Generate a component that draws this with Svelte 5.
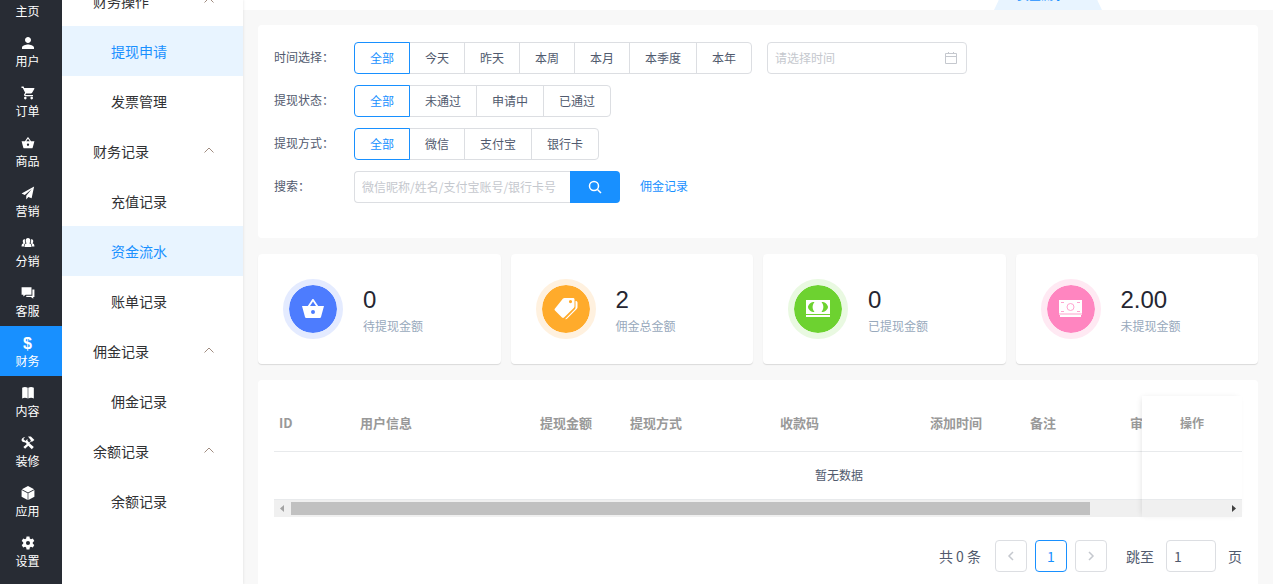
<script lang="ts">
    interface NavItem {
        label: string;
        box?: string;
        path?: string;
        glyph?: string;
    }

    const basket = "M17.2 9 12.8 2.4c-.4-.6-1.3-.6-1.7 0L6.8 9H1l3 11c.2.7.8 1 1.5 1h13c.7 0 1.3-.3 1.5-1l3-11h-5.8zM9 9l3-4.5L15 9H9zm3 8a2 2 0 1 1 0-4 2 2 0 0 1 0 4z";

    /** entries of the dark rail on the left */
    const nav: NavItem[] = [
        { label: "主页", path: "M10 20v-6h4v6h5v-8h3L12 3 2 12h3v8z" },
        { label: "用户", box: "32 32 448 448", path: "M256 256c52.8 0 96-43.2 96-96s-43.2-96-96-96-96 43.2-96 96 43.2 96 96 96zm0 48c-63.6 0-192 32.4-192 96v48h384v-48c0-63.6-128.4-96-192-96z" },
        { label: "订单", box: "32 32 448 448", path: "M169.6 377.6a41.6 41.6 0 1 0 0 83.2 41.6 41.6 0 0 0 0-83.2zM48 51.2v41.6h41.6l74.9 151.7-31.3 51c-3.1 5.2-5.2 12.4-5.2 19.7 0 27.9 19 41.6 44.8 41.6H416v-40H177.9c-3.1 0-5.2-2-5.2-5.2l2.2-5.2 20.8-32.8h155c15.6 0 29-8.3 36.4-21.8l74.9-128.8c1.2-2.5 2-6.2 2-10.4 0-11.4-9.4-19.8-20.8-19.8H135.4l-19.8-41.6H48zm326.4 326.4a41.6 41.6 0 1 0 0 83.2 41.6 41.6 0 0 0 0-83.2z" },
        { label: "商品", path: basket },
        { label: "营销", path: "M22.5 1 1 13l5.5 2.3L18.5 5 9 16.5V23l3.6-4.3 5.6 2.3z" },
        { label: "分销", path: "M12 3.5c-2.6 0-4 2-4 4.5 0 2 .8 3.5 1.8 4.4C7 13 6 14.5 6 19h12c0-4.5-1-6-3.8-6.6 1-.9 1.8-2.4 1.8-4.4 0-2.5-1.4-4.5-4-4.5zM6 5.5C4 5.5 3 7 3 9c0 1.5.6 2.6 1.3 3.3C1.7 13 1 14.5 1 18h4c0-3 .5-4.5 2.7-6C6.6 10.5 6.4 8 7 5.7zm12 0c2 0 3 1.5 3 3.5 0 1.5-.6 2.6-1.3 3.3 2.6.7 3.3 2.2 3.3 5.7h-4c0-3-.5-4.5-2.7-6 1.1-1.5 1.3-4 .7-6.3z" },
        { label: "客服", path: "M1 2h17v13H8l-4 3v-3H1zM19.5 6H23v13h-2v3l-4-3H9v-2.5h10.5z" },
        { label: "财务", glyph: "$" },
        { label: "内容", path: "M2 3c3-2 6.500-2 9.500 0v18.500c-3-2-6.500-2-9.500 0zM12.500 3c3-2 6.500-2 9.500 0v18.500c-3-2-6.500-2-9.500 0z" },
        { label: "装修", path: "M1 7c0-3 2.500-5.500 6-5l-3 3 3.500 3.500L11 5c.3 1 .3 2 0 3l3 3 3-3-1-2-4-5h5l6 6-4 3-2-.5-2.500 3L22 19l-3.500 3.500-6-6L7 22l-3-3 6-5.500-3-3c-3 .5-6-.5-6-3.500z" },
        { label: "应用", path: "M12 0 22.500 5.500 12 11 1.500 5.500zM1 7l10.400 5.500V24L1 18.500zM23 7l-10.400 5.500V24L23 18.500z" },
        { label: "设置", path: "M9.500 1h5l.6 3.300 2 1.200 3.200-1.200 2.500 4.300-2.600 2.200v2.400l2.600 2.200-2.500 4.300-3.200-1.200-2 1.200-.6 3.300h-5l-.6-3.300-2-1.200-3.200 1.200-2.500-4.300 2.600-2.200v-2.400L1.200 8.600l2.500-4.300 3.200 1.200 2-1.200zM12 15.500a3.500 3.500 0 1 0 0-7 3.500 3.500 0 0 0 0 7z" }
    ];

    /** second level menu of the finance section */
    const menu = [
        { title: "财务操作", items: ["提现申请", "发票管理"] },
        { title: "财务记录", items: ["充值记录", "资金流水", "账单记录"] },
        { title: "佣金记录", items: ["佣金记录"] },
        { title: "余额记录", items: ["余额记录"] }
    ];
    const highlighted = ["提现申请", "资金流水"];

    const filters = $state([
        { id: "time", label: "时间选择：", options: ["全部", "今天", "昨天", "本周", "本月", "本季度", "本年"], value: "全部" },
        { id: "status", label: "提现状态：", options: ["全部", "未通过", "申请中", "已通过"], value: "全部" },
        { id: "method", label: "提现方式：", options: ["全部", "微信", "支付宝", "银行卡"], value: "全部" }
    ]);

    const stats = [
        { kind: "basket", value: "0", label: "待提现金额" },
        { kind: "tags", value: "2", label: "佣金总金额" },
        { kind: "note", value: "0", label: "已提现金额" },
        { kind: "cash", value: "2.00", label: "未提现金额" }
    ];

    const columns = [
        { title: "ID", width: 81 },
        { title: "用户信息", width: 180 },
        { title: "提现金额", width: 90 },
        { title: "提现方式", width: 150 },
        { title: "收款码", width: 150 },
        { title: "添加时间", width: 100 },
        { title: "备注", width: 100 },
        { title: "审核状态", width: 179 },
        { title: "", width: 100 }
    ];

    let keyword = $state("");
    let date = $state("");
    let page = $state("1");
</script>

<div class="layout">
    <nav class="rail">
        {#each nav as item}
            <a href="#{item.label}" class="rail-item" class:active={item.label === "财务"}>
                {#if item.glyph}
                    <b class="rail-glyph">{item.glyph}</b>
                {:else}
                    <svg class="rail-icon" viewBox={item.box ?? "0 0 24 24"}><path fill-rule="evenodd" d={item.path} /></svg>
                {/if}
                <span>{item.label}</span>
            </a>
        {/each}
    </nav>

    <nav class="menu">
        <div class="menu-scroll">
            {#each menu as group}
                <button class="menu-title">
                    {group.title}
                    <svg class="chevron" viewBox="0 0 10 8"><path d="M.5 5.5 5 1l4.5 4.5" /></svg>
                </button>
                {#each group.items as item}
                    <a href="#{item}" class="menu-item" class:active={highlighted.includes(item)}>{item}</a>
                {/each}
            {/each}
        </div>
    </nav>

    <div class="page">
        <div class="tabs">
            <button class="tab">资金流水</button>
        </div>

        <main class="content">
            <section class="card filters">
                {#each filters as filter}
                    <div class="row">
                        <span class="label" id="label-{filter.id}">{filter.label}</span>
                        <div class="group" role="radiogroup" aria-labelledby="label-{filter.id}">
                            {#each filter.options as option}
                                <label class="option" class:checked={filter.value === option}>
                                    <input type="radio" name={filter.id} value={option} bind:group={filter.value} />
                                    {option}
                                </label>
                            {/each}
                        </div>
                        {#if filter.id === "time"}
                            <div class="date">
                                <input type="text" placeholder="请选择时间" aria-label="请选择时间" bind:value={date} />
                                <svg viewBox="0 0 14 14"><path d="M1.5 2.5h11v10h-11zM1.5 5.5h11M4.5 1v2M9.5 1v2" /></svg>
                            </div>
                        {/if}
                    </div>
                {/each}
                <div class="row">
                    <label class="label" for="keyword">搜索：</label>
                    <div class="search">
                        <input id="keyword" type="text" placeholder="微信昵称/姓名/支付宝账号/银行卡号" bind:value={keyword} />
                        <button aria-label="搜索">
                            <svg viewBox="0 0 14 14"><circle cx="6" cy="6" r="4.5" /><path d="m9.5 9.5 3.5 3.5" /></svg>
                        </button>
                    </div>
                    <a class="link" href="#commission">佣金记录</a>
                </div>
            </section>

            <section class="stats">
                {#each stats as stat}
                    <div class="card stat">
                        <div class="badge {stat.kind}">
                            {#if stat.kind === "basket"}
                                <svg viewBox="0 0 24 24"><path d={basket} /></svg>
                            {:else if stat.kind === "tags"}
                                <svg viewBox="0 0 24 24">
                                    <path fill-rule="evenodd" d="M10.5 1H19c1 0 1.500.5 1.500 1.500V9c0 1-.3 1.500-1 2.200L10 20.500c-.6.6-1.300.6-2 0l-7-7c-.6-.6-.6-1.300 0-2L9 1.500zM16.500 3a1.600 1.600 0 1 0 0 3.200 1.600 1.600 0 0 0 0-3.200z" />
                                    <path d="M21.500 4c1.300 0 2 .6 2 1.800V10c0 1-.3 1.600-1 2.300L13 21.800c-.6.6-1.200.6-1.800.2l9.600-9.800c.5-.5.7-1 .7-1.700z" />
                                </svg>
                            {:else if stat.kind === "note"}
                                <svg viewBox="0 0 24 24">
                                    <path fill-rule="evenodd" d="M0 3h24v14H0zM7 5c-2 0-5 3-5 5s3 5 5 5h1.500C6 12 6 8 8.500 5zM17 5c2 0 5 3 5 5s-3 5-5 5h-1.500c2.500-3 2.500-7 0-10z" />
                                    <path d="M0 18h24v2H0z" />
                                </svg>
                            {:else}
                                <svg viewBox="0 0 24 24">
                                    <path d="M0 3h23v13H0z" />
                                    <path class="faint" d="M0 16h23v2H0z" />
                                    <path d="M1 18h21v2H1z" />
                                    <path class="line" d="M2 5.5h3M18 5.5h3M2 14.5h3M18 14.5h3" />
                                    <circle class="line" cx="11.5" cy="10" r="3.5" />
                                </svg>
                            {/if}
                        </div>
                        <div>
                            <div class="value">{stat.value}</div>
                            <div class="caption">{stat.label}</div>
                        </div>
                    </div>
                {/each}
            </section>

            <section class="card list">
                <div class="table-box">
                    <div class="table-clip">
                        <table>
                            <colgroup>
                                {#each columns as column}
                                    <col style="width: {column.width}px" />
                                {/each}
                            </colgroup>
                            <thead>
                                <tr>
                                    {#each columns as column}
                                        <th>{column.title}</th>
                                    {/each}
                                </tr>
                            </thead>
                            <tbody>
                                <tr><td colspan={columns.length}>暂无数据</td></tr>
                            </tbody>
                        </table>
                    </div>
                    <div class="scrollbar">
                        <svg class="arrow muted" viewBox="0 0 17 17"><path d="M10 5v7L6 8.5z" /></svg>
                        <div class="track"><div class="thumb"></div></div>
                        <svg class="arrow" viewBox="0 0 17 17"><path d="M7 5v7l4-3.5z" /></svg>
                    </div>
                    <div class="fixed-column">
                        <div class="fixed-head">操作</div>
                        <div class="fixed-body"></div>
                    </div>
                </div>

                <div class="pager">
                    <span class="total">共 0 条</span>
                    <button class="page-button" disabled aria-label="上一页">
                        <svg viewBox="0 0 8 10"><path d="M6 1 2 5l4 4" /></svg>
                    </button>
                    <button class="page-button current">1</button>
                    <button class="page-button" disabled aria-label="下一页">
                        <svg viewBox="0 0 8 10"><path d="m2 1 4 4-4 4" /></svg>
                    </button>
                    <label class="jump">跳至 <input type="text" bind:value={page} /> 页</label>
                </div>
            </section>
        </main>
    </div>
</div>

<style>
    :global(body) {
        margin: 0;
    }

    .layout {
        display: flex;
        height: 100vh;
        overflow: hidden;
        background: #f8f8f8;
        color: #515a6e;
        font-family: "Noto Sans CJK SC", sans-serif;
        font-size: 12px;
        line-height: 18px;
    }

    .layout * {
        box-sizing: border-box;
    }

    button,
    input {
        font: inherit;
        color: inherit;
        margin: 0;
    }

    a {
        text-decoration: none;
    }

    .rail {
        flex: none;
        width: 62px;
        background: #282c34;
    }

    /* both menus are scrolled down by half an entry */
    .rail-item:first-child,
    .menu-scroll {
        margin-top: -24px;
    }

    .rail-item {
        display: flex;
        flex-direction: column;
        align-items: center;
        gap: 2px;
        height: 50px;
        padding: 10px 7px 0 0;
        color: #fff;
    }

    .rail-item.active {
        background: #1890ff;
    }

    .rail-icon {
        width: 14px;
        height: 14px;
        fill: #fff;
    }

    .rail-glyph {
        height: 14px;
        font-family: "Liberation Sans", sans-serif;
        font-size: 16px;
        line-height: 16px;
    }

    .menu {
        flex: none;
        width: 181px;
        background: #fff;
        box-shadow: 1px 0 2px rgba(0, 0, 0, 0.06);
        z-index: 1;
    }

    .menu-title,
    .menu-item {
        display: flex;
        align-items: center;
        width: 100%;
        height: 50px;
        border: none;
        background: none;
        font-size: 14px;
        color: #303133;
    }

    .menu-title {
        justify-content: space-between;
        padding: 0 29px 0 31px;
    }

    .menu-item {
        padding-left: 49px;
    }

    .menu-item.active {
        background: #e8f4ff;
        color: #1890ff;
    }

    .chevron {
        width: 10px;
        height: 8px;
        fill: none;
        stroke: #a08c80;
    }

    .page {
        flex: 1;
        min-width: 0;
    }

    .tabs {
        display: flex;
        align-items: flex-end;
        justify-content: flex-end;
        height: 10px;
        padding-right: 171px;
        overflow: hidden;
        background: #fff;
    }

    .tab {
        flex: none;
        width: 108px;
        height: 36px;
        padding: 6px 14px 0 0;
        border: none;
        background: #e8f4ff;
        color: #1890ff;
        clip-path: polygon(12% 0, 88% 0, 96% 75%, 100% 100%, 0 100%, 4% 75%);
    }

    .content {
        padding: 15px;
    }

    .card {
        background: #fff;
        border-radius: 4px;
    }

    .filters {
        display: flex;
        flex-direction: column;
        gap: 11px;
        padding: 17px 16px 35px;
    }

    .row {
        display: flex;
        height: 32px;
    }

    .label {
        width: 80px;
        line-height: 30px;
    }

    .group {
        display: flex;
    }

    .option {
        position: relative;
        padding: 0 15px;
        border: 1px solid #dcdee2;
        line-height: 30px;
        cursor: pointer;
    }

    .option + .option {
        margin-left: -1px;
    }

    .option:first-child {
        border-radius: 4px 0 0 4px;
    }

    .option:last-child {
        border-radius: 0 4px 4px 0;
    }

    .option.checked {
        border-color: #1890ff;
        color: #1890ff;
        z-index: 1;
    }

    .option input {
        position: absolute;
        opacity: 0;
    }

    .date {
        display: flex;
        align-items: center;
        width: 200px;
        margin-left: 15px;
        padding: 0 8px 0 7px;
        border: 1px solid #dcdee2;
        border-radius: 4px;
    }

    .date input {
        flex: 1;
        min-width: 0;
        padding: 0;
        border: none;
        outline: none;
    }

    .date svg {
        width: 14px;
        height: 14px;
        fill: none;
        stroke: #c5c8ce;
    }

    input::placeholder {
        color: #c5c8ce;
    }

    .search {
        display: flex;
        width: 266px;
    }

    .search input {
        flex: 1;
        min-width: 0;
        padding: 0 7px;
        border: 1px solid #dcdee2;
        border-right: none;
        border-radius: 4px 0 0 4px;
    }

    .search button {
        display: flex;
        align-items: center;
        justify-content: center;
        width: 50px;
        border: none;
        border-radius: 0 4px 4px 0;
        background: #1890ff;
    }

    .search svg {
        width: 14px;
        height: 14px;
        fill: none;
        stroke: #fff;
        stroke-width: 1.5;
    }

    .link {
        margin-left: 20px;
        color: #1890ff;
        line-height: 30px;
    }

    .stats {
        display: grid;
        grid-template-columns: repeat(4, 1fr);
        gap: 10px;
        margin: 16px 0;
    }

    .stat {
        display: flex;
        align-items: center;
        gap: 20px;
        height: 110px;
        padding: 0 25px;
        box-shadow: 0 1px 1px rgba(0, 0, 0, 0.12);
    }

    .badge {
        display: flex;
        align-items: center;
        justify-content: center;
        width: 60px;
        height: 60px;
        border: 6px solid;
        border-radius: 50%;
        background-clip: padding-box;
    }

    .badge svg {
        width: 24px;
        height: 24px;
        fill: #fff;
    }

    .badge.basket {
        border-color: #e4ebff;
        background-color: #4d7cfe;
    }

    .badge.tags {
        border-color: #fff1df;
        background-color: #ffab2b;
    }

    .badge.note {
        border-color: #e9f9e1;
        background-color: #6dd230;
    }

    .badge.cash {
        border-color: #ffe9f3;
        background-color: #ff85c0;
    }

    .badge .faint {
        fill: #ffd0e6;
    }

    .badge .line {
        fill: none;
        stroke: #ffa5d0;
    }

    .value {
        font-family: "Liberation Sans", sans-serif;
        font-size: 24px;
        line-height: 34px;
        color: #252631;
    }

    .caption {
        color: #98a9bc;
    }

    .list {
        padding: 16px;
    }

    .table-box {
        position: relative;
    }

    .table-clip {
        overflow: hidden;
    }

    table {
        width: 1130px;
        table-layout: fixed;
        border-collapse: separate;
        border-spacing: 0;
    }

    th,
    td {
        padding: 0 5px 2px;
        border-bottom: 1px solid #e8eaec;
    }

    th {
        height: 56px;
        font-size: 13px;
        text-align: left;
        color: #999;
    }

    td {
        height: 48px;
        text-align: center;
    }

    .scrollbar {
        display: flex;
        height: 17px;
        background: #f0f0f0;
    }

    .arrow {
        flex: none;
        width: 17px;
        height: 17px;
        fill: #404040;
    }

    .arrow.muted {
        fill: #a3a3a3;
    }

    .track {
        flex: 1;
        padding: 2px 0;
    }

    .thumb {
        width: calc(100% - 135px);
        height: 13px;
        background: #c1c1c1;
    }

    .fixed-column {
        position: absolute;
        top: 0;
        right: 0;
        width: 100px;
        height: 100%;
        box-shadow: -2px 0 6px -2px rgba(0, 0, 0, 0.12);
    }

    .fixed-head,
    .fixed-body {
        border-bottom: 1px solid #e8eaec;
        background: #fff;
    }

    .fixed-head {
        height: 56px;
        line-height: 54px;
        text-align: center;
        font-weight: bold;
        color: #999;
    }

    .fixed-body {
        height: 48px;
    }

    .pager {
        display: flex;
        align-items: center;
        justify-content: flex-end;
        gap: 8px;
        margin-top: 23px;
        font-size: 14px;
    }

    .total {
        margin-right: 6px;
    }

    .page-button {
        display: flex;
        align-items: center;
        justify-content: center;
        width: 32px;
        height: 32px;
        padding: 0;
        border: 1px solid #dcdee2;
        border-radius: 4px;
        background: #fff;
    }

    .page-button.current {
        border-color: #1890ff;
        color: #1890ff;
    }

    .page-button svg {
        width: 8px;
        height: 10px;
        fill: none;
        stroke: #c5c8ce;
        stroke-width: 1.5;
    }

    .jump {
        display: flex;
        align-items: center;
        gap: 12px;
        margin-left: 11px;
    }

    .jump input {
        width: 50px;
        height: 32px;
        padding: 0 7px;
        border: 1px solid #dcdee2;
        border-radius: 4px;
    }
</style>
